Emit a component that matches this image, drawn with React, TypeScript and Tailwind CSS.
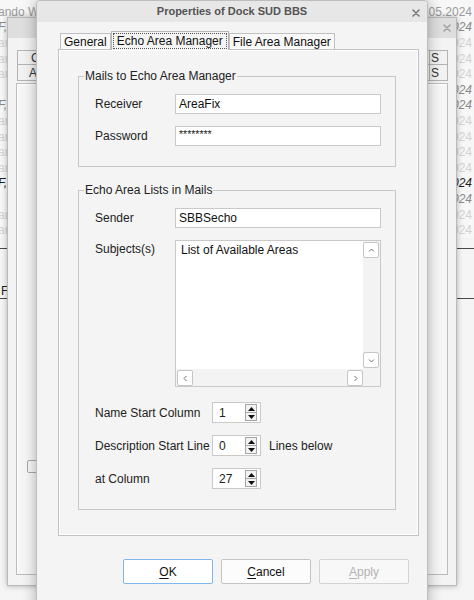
import React from "react";

type Tone = "head" | "faded" | "mid" | "dark";

// rows of the list window furthest back; only its edges show
const backRows: { l: string; r: string; t: Tone }[] = [
  { l: "ando W", r: "12.05.2024", t: "head" },
  { l: "F,", r: "12.05.2024", t: "mid" },
  { l: "ar", r: "12.05.2024", t: "faded" },
  { l: "ar", r: "12.05.2024", t: "faded" },
  { l: "ar", r: "12.05.2024", t: "faded" },
  { l: "", r: "12.05.2024", t: "mid" },
  { l: "F,", r: "12.05.2024", t: "mid" },
  { l: "ar", r: "12.05.2024", t: "faded" },
  { l: "ar", r: "12.05.2024", t: "faded" },
  { l: "ar", r: "12.05.2024", t: "faded" },
  { l: "ar", r: "12.05.2024", t: "faded" },
  { l: "F,", r: "12.05.2024", t: "dark" },
  { l: "", r: "12.05.2024", t: "mid" },
  { l: "ar", r: "12.05.2024", t: "faded" },
  { l: "ar", r: "12.05.2024", t: "faded" },
];

const toneClass: Record<Tone, string> = {
  head: "text-[#9c9c9c]",
  faded: "text-[#d2d2d2]",
  mid: "text-[#8a8a8a] italic",
  dark: "text-[#1e1e1e] italic",
};

function Cross({ className }: { className?: string }) {
  return (
    <svg width="8" height="8" viewBox="0 0 8 8" className={className}>
      <path d="M1 1L7 7M7 1L1 7" stroke="currentColor" strokeWidth="1.6" strokeLinecap="round" />
    </svg>
  );
}

function Chevron({ dir }: { dir: "up" | "down" | "left" | "right" }) {
  const d = {
    up: "M2 5.5L4.5 3L7 5.5",
    down: "M2 3.5L4.5 6L7 3.5",
    left: "M5.5 2L3 4.5L5.5 7",
    right: "M3.5 2L6 4.5L3.5 7",
  }[dir];
  return (
    <svg width="9" height="9" viewBox="0 0 9 9">
      <path d={d} fill="none" stroke="#6f6f6f" strokeWidth="1" />
    </svg>
  );
}

function ScrollBtn({ dir }: { dir: "up" | "down" | "left" | "right" }) {
  return (
    <div className="w-[16px] h-[16px] rounded-[2px] border border-[#c6c6c6] bg-white flex items-center justify-center">
      <Chevron dir={dir} />
    </div>
  );
}

function TextInput({ value, small }: { value: string; small?: boolean }) {
  return (
    <div className="w-[206px] h-[20px] bg-white border border-[#c9c9c9] flex items-center pl-[3px]">
      <span className={small ? "text-[10.5px] leading-none -mt-[3px]" : "text-[12px] leading-none text-[#111]"}>
        {value}
      </span>
    </div>
  );
}

function Spin({ value }: { value: string }) {
  return (
    <div className="w-[49px] h-[21px] bg-white border border-[#c9c9c9] flex items-center pl-[6px] pr-[3px]">
      <span className="flex-1 text-[12px] leading-none text-[#222]">{value}</span>
      <div className="w-[12px] h-[17px] border border-[#a6a6a6] bg-[#f2f2f2] flex flex-col">
        <div className="flex-1 flex items-center justify-center border-b border-[#a6a6a6]">
          <svg width="7" height="4" viewBox="0 0 7 4">
            <path d="M0 4L3.5 0L7 4Z" fill="#111" />
          </svg>
        </div>
        <div className="flex-1 flex items-center justify-center">
          <svg width="7" height="4" viewBox="0 0 7 4">
            <path d="M0 0L3.5 4L7 0Z" fill="#111" />
          </svg>
        </div>
      </div>
    </div>
  );
}

function Tab({ label, selected }: { label: string; selected?: boolean }) {
  if (selected) {
    return (
      <div className="h-[19px] -mb-px bg-[#f4f4f4] border border-b-0 border-[#b6b6b6] px-[1px] pt-[1px]">
        <div className="h-[16px] border border-dotted border-[#555] px-[3px] flex items-center text-[12px] leading-none text-[#111]">
          {label}
        </div>
      </div>
    );
  }
  return (
    <div className="h-[16px] bg-[#f9f9f9] border border-b-0 border-[#c0c0c0] px-[3px] flex items-center text-[12px] leading-none text-[#111]">
      {label}
    </div>
  );
}

function DlgButton({ label, mnemonic, variant }: { label: string; mnemonic: number; variant: "default" | "normal" | "disabled" }) {
  const cls = {
    default: "border-[#82b6ec] bg-white text-[#111]",
    normal: "border-[#c4c4c4] bg-[#fcfcfc] text-[#111]",
    disabled: "border-[#d3d3d3] bg-[#f8f8f8] text-[#b3b3b3]",
  }[variant];
  return (
    <div className={`w-[90px] h-[25px] rounded-[2px] border flex items-center justify-center text-[12px] ${cls}`}>
      <span>
        {label.slice(0, mnemonic)}
        <span className="underline underline-offset-2">{label[mnemonic]}</span>
        {label.slice(mnemonic + 1)}
      </span>
    </div>
  );
}

export default function App() {
  return (
    <div className="relative w-[474px] h-[600px] overflow-hidden bg-[#f4f4f4] font-['Liberation_Sans',Arial,sans-serif]">
      {/* list window at the back */}
      <div className="absolute inset-0 bg-[#f5f5f5]">
        <div className="pt-[4px] bg-[#f7f7f7]">
          {backRows.map((r, i) => (
            <div key={i} className={`h-[15.6px] flex justify-between items-center text-[12px] leading-none ${toneClass[r.t]}`}>
              <span className="-ml-[2px]">{r.l}</span>
              <span className="pr-[2px]">{r.r}</span>
            </div>
          ))}
        </div>
        <div className="mt-[10px] border-t border-[#4a4a4a]" />
        <div className="h-[49px] flex items-end text-[12px] leading-none text-[#222]">
          <span className="pl-[1px] pb-[1px]">F</span>
        </div>
        <div className="border-t border-[#4a4a4a]" />
      </div>

      {/* window behind the dialog */}
      <div className="absolute left-[7px] top-[17px] w-[450px] h-[569px] bg-[#f3f3f3] border border-[#b9b9b9] shadow-[0_0_6px_rgba(0,0,0,0.28)] flex flex-col">
        <div className="h-[20px] bg-[#dedede] flex items-center justify-end pr-[5px] text-[#a3a3a3]">
          <Cross />
        </div>
        <div className="mt-[12px] ml-[9px] mr-[8px] text-[12px] leading-none text-[#333]">
          <div className="flex h-[15px]">
            <div className="w-[60px] border border-[#b3b3b3] bg-[#f2f2f2] flex items-center pl-[13px]">Conf</div>
            <div className="flex-1 border-y border-[#b3b3b3] bg-[#f2f2f2]" />
            <div className="w-[19px] border border-[#b3b3b3] bg-[#f2f2f2] flex items-center pl-[1px]">S</div>
          </div>
          <div className="flex h-[16px]">
            <div className="w-[60px] border border-t-0 border-[#b3b3b3] bg-[#f2f2f2] flex items-center pl-[11px]">Area</div>
            <div className="flex-1 border-b border-[#b3b3b3] bg-[#f2f2f2]" />
            <div className="w-[19px] border border-t-0 border-[#b3b3b3] bg-[#f2f2f2] flex items-center pl-[1px]">S</div>
          </div>
        </div>
        <div className="flex-1 mt-[2px] mb-[10px] mx-[8px] border border-[#bcbcbc] bg-[#f6f6f6] shadow-[inset_1px_1px_0_#fff]">
          <div className="mt-[376px] ml-[10px] w-[13px] h-[13px] rounded-[2px] border border-[#a9a9a9] bg-[#f8f8f8]" />
        </div>
      </div>

      {/* Properties dialog */}
      <div className="absolute left-[36px] top-0 w-[392px] h-[620px] bg-[#f4f4f4] border border-[#bdbdbd] rounded-t-[4px] shadow-[0_0_14px_rgba(0,0,0,0.3)] flex flex-col">
        <div className="relative h-[21px] bg-[#e7e7e7] rounded-t-[4px] flex items-center justify-center">
          <span className="text-[11px] font-bold text-[#545454]">Properties of Dock SUD BBS</span>
          <Cross className="absolute right-[7px] top-[8px] text-[#7a7a7a]" />
        </div>

        <div className="ml-[21px] mr-[8px] mt-[9px]">
          <div className="relative z-10 flex items-end h-[18px] pl-[2px]">
            <Tab label="General" />
            <Tab label="Echo Area Manager" selected />
            <Tab label="File Area Manager" />
          </div>
          <div className="h-[487px] border border-[#c2c2c2] bg-[#f4f4f4] shadow-[inset_1px_1px_0_#fff,inset_-1px_-1px_0_#fff] pt-[19px] pl-[19px] pr-[23px] text-[12px] text-[#222]">
            <fieldset className="border border-[#c8c8c8] pl-[16px] pr-[14px] pt-[11px] pb-[20px]">
              <legend className="-ml-[11px] px-[1px] leading-[14px] text-[#222]">Mails to Echo Area Manager</legend>
              <div className="flex flex-col gap-[12px]">
                <div className="flex items-center">
                  <span className="w-[80px]">Receiver</span>
                  <TextInput value="AreaFix" />
                </div>
                <div className="flex items-center">
                  <span className="w-[80px]">Password</span>
                  <TextInput value="********" small />
                </div>
              </div>
            </fieldset>

            <fieldset className="mt-[16px] border border-[#c8c8c8] pl-[16px] pr-[14px] pt-[11px] pb-[20px]">
              <legend className="-ml-[11px] px-[1px] leading-[14px] text-[#222]">Echo Area Lists in Mails</legend>
              <div className="flex items-center">
                <span className="w-[80px]">Sender</span>
                <TextInput value="SBBSecho" />
              </div>
              <div className="flex mt-[12px]">
                <span className="w-[80px] pt-[2px] leading-[14px]">Subjects(s)</span>
                <div className="w-[206px] h-[147px] border border-[#c9c9c9] grid grid-cols-[1fr_17px] grid-rows-[1fr_17px]">
                  <div className="bg-white pl-[5px] pt-[2px] leading-[14px] text-[#111]">List of Available Areas</div>
                  <div className="bg-[#f3f3f3] flex flex-col justify-between items-start pt-[1px] pb-[1px]">
                    <ScrollBtn dir="up" />
                    <ScrollBtn dir="down" />
                  </div>
                  <div className="bg-[#f3f3f3] flex justify-between items-start pl-[1px] pt-[1px]">
                    <ScrollBtn dir="left" />
                    <ScrollBtn dir="right" />
                  </div>
                  <div className="bg-[#f3f3f3]" />
                </div>
              </div>
              <div className="flex flex-col gap-[12px] mt-[15px]">
                <div className="flex items-center">
                  <span className="w-[117px]">Name Start Column</span>
                  <Spin value="1" />
                </div>
                <div className="flex items-center">
                  <span className="w-[117px]">Description Start Line</span>
                  <Spin value="0" />
                  <span className="ml-[8px]">Lines below</span>
                </div>
                <div className="flex items-center">
                  <span className="w-[117px]">at Column</span>
                  <Spin value="27" />
                </div>
              </div>
            </fieldset>
          </div>
        </div>

        <div className="mt-[23px] pr-[18px] flex justify-end gap-[8px]">
          <DlgButton label="OK" mnemonic={0} variant="default" />
          <DlgButton label="Cancel" mnemonic={0} variant="normal" />
          <DlgButton label="Apply" mnemonic={0} variant="disabled" />
        </div>
      </div>
    </div>
  );
}
